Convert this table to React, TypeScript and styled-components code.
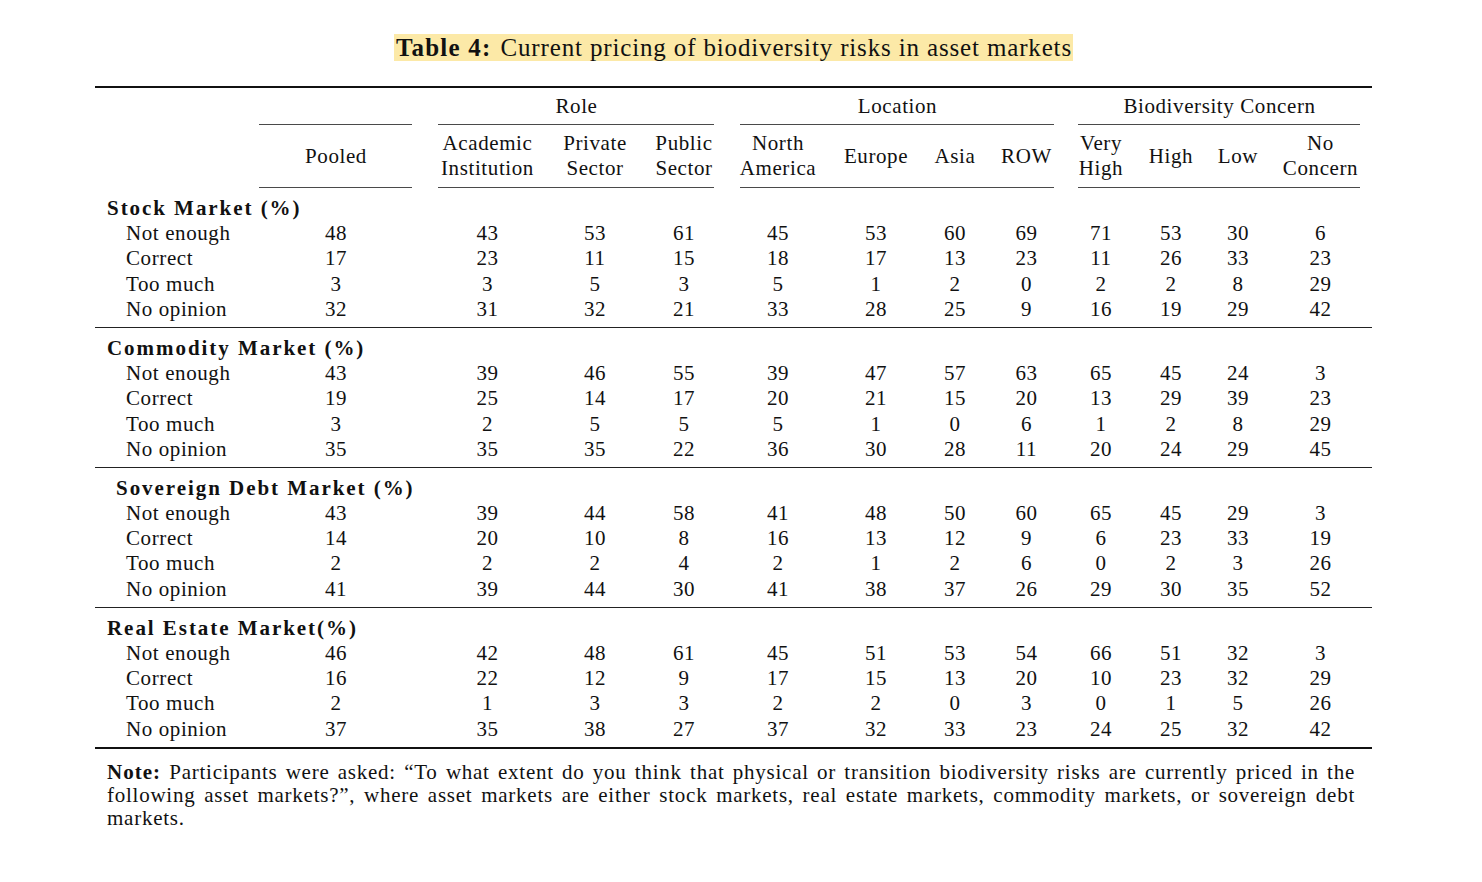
import React from "react";
import styled, { createGlobalStyle } from "styled-components";

const GlobalStyle = createGlobalStyle`
  html, body { margin: 0; padding: 0; background: #ffffff; }
  body {
    font-family: "Liberation Serif", "Times New Roman", serif;
    color: #111;
    -webkit-font-smoothing: antialiased;
  }
`;

const COLS = "152px 178px 125px 90px 88px 100px 96px 62px 81px 68px 72px 62px 103px";

const Page = styled.div`
  padding: 33px 0 40px 95px;
  width: 1277px;
`;

const Caption = styled.div`
  text-align: center;
  font-size: 25px;
  line-height: 29px;
  letter-spacing: 0.85px;
`;

const Highlight = styled.span`
  background: #fce9a7;
  padding: 0 1px 0 2px;
`;

const CaptionLabel = styled.b`
  font-weight: 700;
  letter-spacing: 1.2px;
  margin-right: 9px;
`;

const Table = styled.div`
  margin-top: 24px;
  border-top: 2px solid #111;
  border-bottom: 2px solid #111;
  font-size: 21px;
  letter-spacing: 0.6px;
`;

const HeaderLayout = styled.div`
  display: grid;
  grid-template-columns: 152px 178px 303px 339px 305px;
`;

const HeaderGroup = styled.div`
  display: flex;
  flex-direction: column;
`;

const GroupTitle = styled.div`
  height: 36px;
  padding-top: 6px;
  box-sizing: border-box;
  line-height: 25px;
  text-align: center;
`;

const GroupRule = styled.div<{ $l: number; $r: number }>`
  margin: 0 ${(p) => p.$r}px 0 ${(p) => p.$l}px;
  border-top: 1px solid #4a4a4a;
`;

const SubHeaders = styled.div<{ $cols: string }>`
  display: grid;
  grid-template-columns: ${(p) => p.$cols};
  padding: 6px 0 6px;
  height: 62px;
  box-sizing: border-box;
`;

const SubHeader = styled.div`
  display: flex;
  align-items: center;
  justify-content: center;
  text-align: center;
  line-height: 25px;
`;

const Block = styled.div<{ $last?: boolean }>`
  padding: 8px 0 5px;
  border-bottom: ${(p) => (p.$last ? "none" : "1px solid #222")};
`;

const Row = styled.div`
  display: grid;
  grid-template-columns: ${COLS};
  line-height: 25.2px;
  height: 25.2px;
`;

const SectionLabel = styled.div<{ $indent: number }>`
  grid-column: 1 / -1;
  padding-left: ${(p) => p.$indent}px;
  font-weight: 700;
  letter-spacing: 1.95px;
  white-space: nowrap;
`;

const ItemLabel = styled.div`
  padding-left: 31px;
  white-space: nowrap;
`;

const Num = styled.div`
  text-align: center;
`;

const Note = styled.div`
  margin-top: 12px;
  padding: 0 17px 0 12px;
  font-size: 21px;
  line-height: 23px;
  letter-spacing: 0.75px;
`;

const NoteLine = styled.div<{ $justify?: boolean }>`
  text-align: ${(p) => (p.$justify ? "justify" : "left")};
  text-align-last: ${(p) => (p.$justify ? "justify" : "left")};
  white-space: nowrap;
`;

const NoteLabel = styled.b`
  font-weight: 700;
  letter-spacing: 1px;
`;

type Section = { title: string; indent: number; rows: [string, number[]][] };

const sections: Section[] = [
  {
    title: "Stock Market (%)",
    indent: 12,
    rows: [
      ["Not enough", [48, 43, 53, 61, 45, 53, 60, 69, 71, 53, 30, 6]],
      ["Correct", [17, 23, 11, 15, 18, 17, 13, 23, 11, 26, 33, 23]],
      ["Too much", [3, 3, 5, 3, 5, 1, 2, 0, 2, 2, 8, 29]],
      ["No opinion", [32, 31, 32, 21, 33, 28, 25, 9, 16, 19, 29, 42]],
    ],
  },
  {
    title: "Commodity Market (%)",
    indent: 12,
    rows: [
      ["Not enough", [43, 39, 46, 55, 39, 47, 57, 63, 65, 45, 24, 3]],
      ["Correct", [19, 25, 14, 17, 20, 21, 15, 20, 13, 29, 39, 23]],
      ["Too much", [3, 2, 5, 5, 5, 1, 0, 6, 1, 2, 8, 29]],
      ["No opinion", [35, 35, 35, 22, 36, 30, 28, 11, 20, 24, 29, 45]],
    ],
  },
  {
    title: "Sovereign Debt Market (%)",
    indent: 21,
    rows: [
      ["Not enough", [43, 39, 44, 58, 41, 48, 50, 60, 65, 45, 29, 3]],
      ["Correct", [14, 20, 10, 8, 16, 13, 12, 9, 6, 23, 33, 19]],
      ["Too much", [2, 2, 2, 4, 2, 1, 2, 6, 0, 2, 3, 26]],
      ["No opinion", [41, 39, 44, 30, 41, 38, 37, 26, 29, 30, 35, 52]],
    ],
  },
  {
    title: "Real Estate Market(%)",
    indent: 12,
    rows: [
      ["Not enough", [46, 42, 48, 61, 45, 51, 53, 54, 66, 51, 32, 3]],
      ["Correct", [16, 22, 12, 9, 17, 15, 13, 20, 10, 23, 32, 29]],
      ["Too much", [2, 1, 3, 3, 2, 2, 0, 3, 0, 1, 5, 26]],
      ["No opinion", [37, 35, 38, 27, 37, 32, 33, 23, 24, 25, 32, 42]],
    ],
  },
];

type Group = { title: string; cols: string; l: number; r: number; heads: React.ReactNode[] };

const groups: Group[] = [
  { title: "", cols: "178px", l: 12, r: 13, heads: ["Pooled"] },
  {
    title: "Role",
    cols: "125px 90px 88px",
    l: 13,
    r: 14,
    heads: [
      <>Academic<br />Institution</>,
      <>Private<br />Sector</>,
      <>Public<br />Sector</>,
    ],
  },
  {
    title: "Location",
    cols: "100px 96px 62px 81px",
    l: 12,
    r: 13,
    heads: [<>North<br />America</>, "Europe", "Asia", "ROW"],
  },
  {
    title: "Biodiversity Concern",
    cols: "68px 72px 62px 103px",
    l: 11,
    r: 12,
    heads: [<>Very<br />High</>, "High", "Low", <>No<br />Concern</>],
  },
];

export default function App() {
  return (
    <Page>
      <GlobalStyle />
      <Caption>
        <Highlight>
          <CaptionLabel>Table 4:</CaptionLabel>Current pricing of biodiversity risks in asset markets
        </Highlight>
      </Caption>
      <Table>
        <HeaderLayout>
          <div />
          {groups.map((g, gi) => (
            <HeaderGroup key={gi}>
              <GroupTitle>{g.title}</GroupTitle>
              <GroupRule $l={g.l} $r={g.r} />
              <SubHeaders $cols={g.cols}>
                {g.heads.map((h, hi) => (
                  <SubHeader key={hi}>
                    <span>{h}</span>
                  </SubHeader>
                ))}
              </SubHeaders>
              <GroupRule $l={g.l} $r={g.r} />
            </HeaderGroup>
          ))}
        </HeaderLayout>
        {sections.map((s, si) => (
          <Block key={si} $last={si === sections.length - 1}>
            <Row>
              <SectionLabel $indent={s.indent}>{s.title}</SectionLabel>
            </Row>
            {s.rows.map(([label, vals], ri) => (
              <Row key={ri}>
                <ItemLabel>{label}</ItemLabel>
                {vals.map((v, vi) => (
                  <Num key={vi}>{v}</Num>
                ))}
              </Row>
            ))}
          </Block>
        ))}
      </Table>
      <Note>
        <NoteLine $justify>
          <NoteLabel>Note:</NoteLabel> Participants were asked: “To what extent do you think that physical or
          transition biodiversity risks are currently priced in the
        </NoteLine>
        <NoteLine $justify>
          following asset markets?”, where asset markets are either stock markets, real estate markets,
          commodity markets, or sovereign debt
        </NoteLine>
        <NoteLine>markets.</NoteLine>
      </Note>
    </Page>
  );
}
